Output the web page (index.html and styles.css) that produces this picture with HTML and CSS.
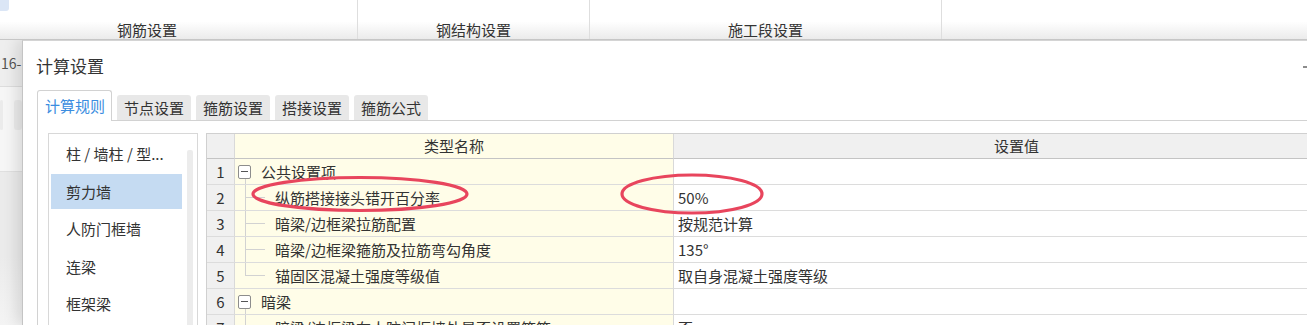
FILE: index.html
```html
<!DOCTYPE html>
<html lang="zh-CN">
<head>
<meta charset="utf-8">
<title>计算设置</title>
<link rel="stylesheet" href="styles.css">
</head>
<body>
<div class="topbar">
  <div class="tcell c1"><span>钢筋设置</span></div>
  <div class="tcell c2"><span>钢结构设置</span></div>
  <div class="tcell c3"><span>施工段设置</span></div>
  <div class="tcell c4"></div>
</div>
<div class="stage">
  <div class="backdrop">
    <div class="bd-top"><span>16-</span></div>
    <div class="bd-mid"><span class="pill p1"></span><span class="pill p2"></span></div>
    <div class="bd-low"></div>
  </div>
  <div class="dialog">
    <div class="dlg-title"><span>计算设置</span><span class="minbtn"></span></div>
    <div class="tabs">
      <div class="tab active">计算规则</div>
      <div class="tab">节点设置</div>
      <div class="tab">箍筋设置</div>
      <div class="tab">搭接设置</div>
      <div class="tab">箍筋公式</div>
    </div>
    <div class="panel">
      <div class="list">
        <ul class="items">
          <li>柱 / 墙柱 / 型...</li>
          <li class="sel">剪力墙</li>
          <li>人防门框墙</li>
          <li>连梁</li>
          <li>框架梁</li>
        </ul>
        <div class="scroll"></div>
      </div>
      <div class="grid">
        <div class="cell num head"></div>
        <div class="cell name head">类型名称</div>
        <div class="cell val head">设置值</div>

        <div class="cell num">1</div>
        <div class="cell name group"><span class="tog"><i></i></span><span class="txt">公共设置项</span></div>
        <div class="cell val"></div>

        <div class="cell num">2</div>
        <div class="cell name child"><span class="br"></span><span class="txt">纵筋搭接接头错开百分率</span></div>
        <div class="cell val">50%</div>

        <div class="cell num">3</div>
        <div class="cell name child"><span class="br"></span><span class="txt">暗梁/边框梁拉筋配置</span></div>
        <div class="cell val">按规范计算</div>

        <div class="cell num">4</div>
        <div class="cell name child"><span class="br"></span><span class="txt">暗梁/边框梁箍筋及拉筋弯勾角度</span></div>
        <div class="cell val">135°</div>

        <div class="cell num">5</div>
        <div class="cell name child"><span class="br last"></span><span class="txt">锚固区混凝土强度等级值</span></div>
        <div class="cell val">取自身混凝土强度等级</div>

        <div class="cell num">6</div>
        <div class="cell name group"><span class="tog"><i></i></span><span class="txt">暗梁</span></div>
        <div class="cell val"></div>

        <div class="cell num">7</div>
        <div class="cell name child"><span class="br"></span><span class="txt">暗梁/边框梁在人防门框墙处是否设置箍筋</span></div>
        <div class="cell val">否</div>
      </div>
    </div>
  </div>
</div>
<svg class="marks" width="1307" height="325" viewBox="0 0 1307 325">
  <ellipse cx="360" cy="194" rx="107" ry="16.5" fill="none" stroke="#e8455d" stroke-width="3.2"/>
  <ellipse cx="692" cy="194" rx="70" ry="19" fill="none" stroke="#e8455d" stroke-width="3.2"/>
</svg>
</body>
</html>
```

FILE: styles.css
```css
* { box-sizing: border-box; }
html, body { margin: 0; padding: 0; }
body {
  width: 1307px;
  height: 325px;
  overflow: hidden;
  background: #fff;
  position: relative;
  font-family: "Noto Sans CJK SC", "Microsoft YaHei", sans-serif;
  color: #333;
}

/* top bar */
.topbar {
  display: flex;
  height: 40px;
  margin-left: -63px;
  width: 1500px;
  border-bottom: 1px solid #c6c6c6;
  background: linear-gradient(#ffffff 0, #ffffff 55%, #ebebeb 100%);
}
.tcell {
  display: flex;
  align-items: flex-end;
  justify-content: center;
  border-right: 1px solid #dedede;
  font-size: 15px;
  line-height: 16px;
  padding-bottom: 1px;
  color: #333;
}
.c1 { width: 421px; position: relative; }
.c1::before {
  content: "";
  position: absolute;
  left: 60px;
  top: -3px;
  width: 12px;
  height: 14px;
  border-radius: 3px;
  background: #dbe6f6;
}
.c2 { width: 232px; }
.c3 { width: 352px; }
.c4 { flex: 1; border-right: none; }

/* stage */
.stage {
  display: flex;
  height: 285px;
  overflow: hidden;
}
.backdrop {
  flex: none;
  width: 22px;
  display: flex;
  flex-direction: column;
  overflow: hidden;
}
.bd-top {
  flex: none;
  height: 47px;
  background: #eeeeee;
  border-bottom: 1px solid #dddddd;
  font-size: 14px;
  line-height: 46px;
  color: #555;
  white-space: nowrap;
  padding-left: 1px;
}
.bd-mid {
  flex: none;
  height: 85px;
  background: #f6f6f6;
  border-bottom: 1px solid #e0e0e0;
  display: flex;
  align-items: flex-start;
  padding-top: 13px;
  gap: 11px;
}
.pill { display: block; height: 30px; background: #ebebeb; border-radius: 3px; }
.p1 { width: 4px; }
.p2 { width: 10px; }
.bd-low {
  flex: 1;
  background: linear-gradient(#ebebeb 0, #ebebeb 55%, #f4f4f4 100%);
}

/* dialog */
.dialog {
  flex: none;
  width: 1400px;
  background: #fff;
  border-left: 1px solid #c4c4c4;
  border-top: 1px solid #d4d4d4;
  box-shadow: -5px 0 14px rgba(0, 0, 0, 0.12);
  display: flex;
  flex-direction: column;
}
.dlg-title {
  flex: none;
  height: 49px;
  display: flex;
  align-items: center;
  padding-left: 13px;
  padding-right: 111px;
  font-size: 17px;
  line-height: 20px;
  color: #333;
}
.minbtn {
  margin-left: auto;
  width: 8px;
  height: 2px;
  background: #8c8c8c;
  margin-top: 3px;
}

.tabs {
  flex: none;
  display: flex;
  align-items: flex-end;
  height: 30px;
  padding-left: 14px;
  font-size: 15px;
  line-height: 18px;
}
.tab {
  height: 25px;
  padding: 0 7px;
  margin-left: 5px;
  background: #e8e8e8;
  border-radius: 3px 3px 0 0;
  display: flex;
  align-items: center;
  color: #333;
}
.tab.active {
  margin-left: 0;
  height: 31px;
  margin-bottom: -1px;
  padding: 0 6px 0 7px;
  background: #fff;
  border: 1px solid #d2d2d2;
  border-bottom: none;
  color: #3b8de0;
  position: relative;
  z-index: 1;
}

.panel {
  flex: 1 1 auto;
  min-height: 0;
  margin-left: 14px;
  border-top: 1px solid #d2d2d2;
  border-left: 1px solid #d2d2d2;
  padding: 12px 0 0 10px;
  display: flex;
  align-items: flex-start;
}

/* left list */
.list {
  flex: none;
  width: 150px;
  height: 200px;
  border: 1px solid #d8d8d8;
  display: flex;
  padding: 1px 4px 0 2px;
}
.items {
  list-style: none;
  margin: 0;
  padding: 0;
  width: 131px;
  font-size: 15px;
}
.items li {
  height: 37.5px;
  display: flex;
  align-items: center;
  padding-left: 15px;
  border-top: 1px solid transparent;
  border-bottom: 1px solid transparent;
  background-clip: padding-box;
  white-space: nowrap;
  color: #333;
}
.items li.sel { background-color: #c5dbf2; }
.scroll {
  width: 6px;
  margin-left: 5px;
  margin-top: 15px;
  height: 200px;
  background: #ececec;
  border-radius: 2px;
}

/* grid */
.grid {
  flex: none;
  margin-left: 8px;
  display: grid;
  grid-template-columns: 28px 439px 686px;
  border-top: 1px solid #d0d0d0;
  border-left: 1px solid #d0d0d0;
  font-size: 15px;
}
.cell {
  height: 26px;
  border-right: 1px solid #d9d9d9;
  border-bottom: 1px solid #dcdcdc;
  display: flex;
  align-items: center;
  line-height: 18px;
  white-space: nowrap;
  overflow: hidden;
  color: #333;
}
.cell.head {
  height: 25px;
  background: #f0f0f0;
  justify-content: center;
  border-bottom-color: #c4c4c4;
}
.cell.num {
  background: #f0f0f0;
  justify-content: center;
}
.cell.name { background-color: #fffde8; }
.cell.val { padding-left: 4px; }
.cell.val.head { padding-left: 0; }

.cell.group {
  padding-left: 3px;
  background: linear-gradient(#d2d2d2, #d2d2d2) 10px 19px / 1px 100% no-repeat, #fffde8;
}
.tog {
  flex: none;
  width: 13px;
  height: 14px;
  border: 1px solid #8d8d8d;
  border-radius: 2px;
  background: #fff;
  display: flex;
  align-items: center;
  justify-content: center;
}
.tog i {
  display: block;
  width: 7px;
  height: 1px;
  background: #555;
}
.group .txt { margin-left: 10px; }

.cell.child { padding-left: 10px; }
.br {
  flex: none;
  width: 20px;
  height: 100%;
  background:
    linear-gradient(#d2d2d2, #d2d2d2) 0 0 / 1px 100% no-repeat,
    linear-gradient(#d2d2d2, #d2d2d2) 0 50% / 100% 1px no-repeat;
}
.br.last {
  background:
    linear-gradient(#d2d2d2, #d2d2d2) 0 0 / 1px 50% no-repeat,
    linear-gradient(#d2d2d2, #d2d2d2) 0 50% / 100% 1px no-repeat;
}
.child .txt { margin-left: 10px; }

/* annotation marks */
.marks {
  position: absolute;
  left: 0;
  top: 0;
  pointer-events: none;
}
```
